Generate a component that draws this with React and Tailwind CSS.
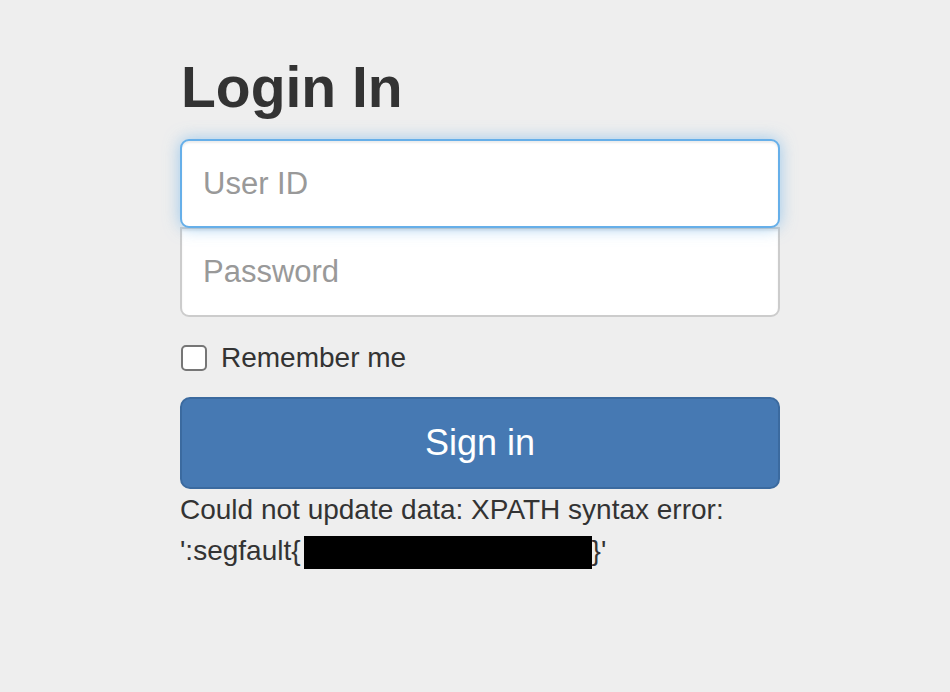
import React from 'react';

export default function App() {
    return (
        <div className="min-h-screen w-full bg-[#eeeeee] text-[#333333] font-['Liberation_Sans',Arial,sans-serif]">
            <form className="w-[600px] ml-[180px] pt-[54px] flex flex-col">
                <h2 className="text-[57px] leading-[66px] font-bold text-[#333333] mb-[19px] ml-[1px]">Login In</h2>

                {/* Inputs */}
                <input
                    type="text"
                    placeholder="User ID"
                    className="relative z-10 h-[89px] w-full bg-white border-2 border-[#66afe9] rounded-[9px] px-[21px] text-[31px] text-[#555] placeholder:text-[#999999] outline-none shadow-[inset_0_2px_2px_rgba(0,0,0,0.075),0_0_16px_rgba(102,175,233,0.6)]"
                />
                <input
                    type="password"
                    placeholder="Password"
                    className="-mt-px h-[90px] w-full bg-white border-2 border-[#cccccc] rounded-b-[9px] px-[21px] text-[31px] text-[#555] placeholder:text-[#999999] outline-none shadow-[inset_0_2px_2px_rgba(0,0,0,0.075)]"
                />

                {/* Remember me */}
                <label className="mt-[21px] h-[40px] flex items-center gap-[14px] text-[28px] leading-[40px]">
                    <input
                        type="checkbox"
                        className="appearance-none w-[26px] h-[26px] bg-white border-2 border-[#767676] rounded-[5px] ml-px"
                    />
                    <span>Remember me</span>
                </label>

                <button
                    type="button"
                    className="mt-[19px] h-[92px] w-full bg-[#4679b3] border-2 border-[#3b6a9f] rounded-[10px] text-white text-[36px]"
                >
                    Sign in
                </button>

                <div className="mt-0 text-[28px] leading-[41px] text-[#333333]">
                    <p>Could not update data: XPATH syntax error:</p>
                    <p className="flex items-center">
                        '<span>:segfault{'{'}</span>
                        <span className="inline-block w-[288px] h-[33px] bg-black mt-[4px] ml-[3px]"></span>
                        <span>{'}'}'</span>
                    </p>
                </div>
            </form>
        </div>
    );
}
